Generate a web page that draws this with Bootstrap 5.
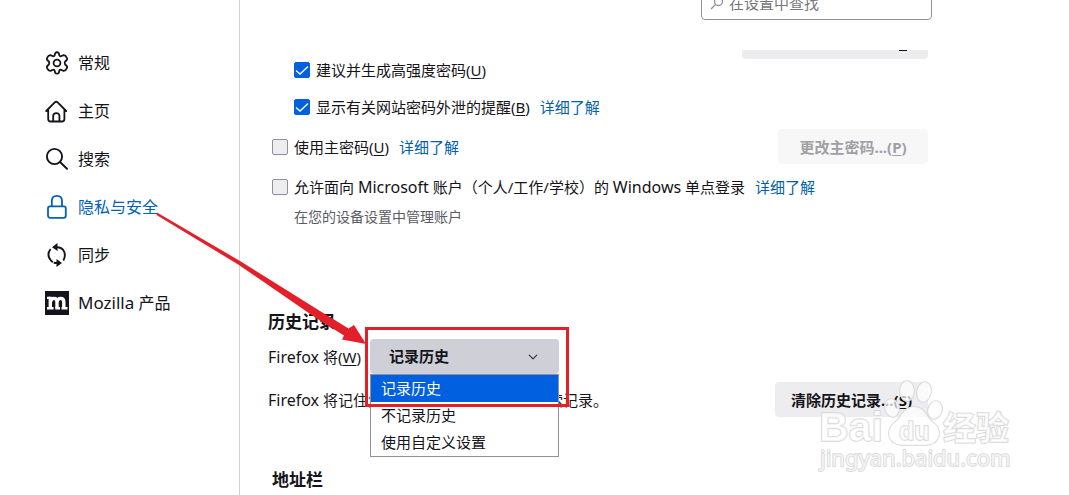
<!DOCTYPE html>
<html lang="zh-CN">
<head>
<meta charset="utf-8">
<meta name="viewport" content="width=device-width, initial-scale=1">
<title>设置</title>
<link rel="stylesheet" href="https://cdn.jsdelivr.net/npm/bootstrap@5.3.0/dist/css/bootstrap.min.css">
<style>
  body { font: 15px/22px "Noto Sans", "Noto Sans CJK SC", sans-serif; color: #15141a; background: #fff; }
  a { color: #0061a8; text-decoration: none; }
  u { text-underline-offset: 2px; }
  .latin { font-size: 16px; line-height: 1; }
  .side-nav { flex: 0 0 240px; padding: 39px 0 0 45px; border-right: 1px solid #cfcfd4; }
  .side-nav .nav-link { height: 48px; padding: 0; gap: 9px; font-size: 16px; color: #15141a; }
  .side-nav .nav-link.active { color: #0061b8; }
  .side-nav .latin { font-size: 17px; }
  .side-nav svg { width: 24px; height: 24px; flex: none; }
  .pane { padding: 0 16px 0 28px; }
  .search-bar { height: 20px; max-width: 664px; }
  .search-box { width: 231px; height: 34px; padding: 0 8px; border: 1px solid #8f8f9d; border-radius: 4px; color: #76767c; }
  .search-box input { border: 0; outline: 0; padding: 0; background: none; min-width: 0; color: inherit; }
  .search-box input::placeholder { color: #76767c; opacity: 1; }
  .prefs { max-width: 660px; }
  .scroll-edge { height: 9px; margin-top: 30px; }
  .pref-btn { height: 35px; padding: 0 16px; border: 0; border-radius: 4px; background: #ededf0; color: #15141a; font-size: 15px; font-weight: 700; white-space: nowrap; }
  .pref-btn:disabled { background: #f7f7f8; color: #a0a0a4; opacity: 1; min-width: 150px; }
  .edge-btn { width: 186px; }
  .pref-check { gap: 6px; padding-left: 4px; height: 22px; white-space: nowrap; }
  .pref-check.nested { padding-left: 26px; }
  .pref-check .form-check-input { width: 16px; height: 16px; margin: 0; border: 1px solid #8f8f9d; border-radius: 2px; background-color: #ededf0; flex: none; }
  .pref-check .form-check-input:checked { background-color: #0060df; border-color: #0060df; background-image: url("data:image/svg+xml,%3csvg xmlns='http://www.w3.org/2000/svg' viewBox='0 0 14 14'%3e%3cpath fill='none' stroke='%23fff' stroke-width='1.3' d='M1 7.500L5 11L13 3.500'/%3e%3c/svg%3e"); }
  .pref-check a { margin-left: 4px; }
  .hint { padding-left: 26px; font-size: 14px; color: #5b5b66; }
  .group-title { font-size: 17px; line-height: 24px; font-weight: 700; margin: 0; }
  .choice { width: 189px; }
  .choice .form-select { height: 35px; padding: 0 32px 0 19px; border: 0; border-radius: 4px; background-color: #cfcfd8; background-size: 10px 10px; background-position: right 21px center; font-size: 15px; font-weight: 700; color: #15141a; }
  .choice .dropdown-menu { top: 35px; left: 0; width: 100%; min-width: 0; padding: 0; border: 1px solid #8f8f9d; border-radius: 0; font-size: 15px; color: #15141a; z-index: 5; }
  .choice .dropdown-item { height: 27px; padding: 0 10px; line-height: 27px; color: #15141a; }
  .choice .dropdown-item.active { background: #0060df; color: #fff; }
  .annotation { left: 0; top: 0; z-index: 10; pointer-events: none; }
  .watermark { left: 812px; top: 374px; z-index: 11; pointer-events: none; }
</style>
</head>
<body>
<div class="d-flex min-vh-100 position-relative overflow-hidden">
  <nav class="side-nav nav flex-column" aria-label="设置类别">
    <a class="nav-link d-flex align-items-center" href="#general">
      <svg viewBox="0 0 24 24" fill="none" stroke="currentColor" stroke-width="1.8" stroke-linejoin="round"><path d="M10.2 2.2Q12 .4 13.8 2.2L14.4 4.5Q14.8 5.5 16 5.2L18.5 4.1Q20.5 3.9 21.6 6.4Q22.600 8.200 21.700 9L20.200 10.500Q19.300 12 20.200 13.500L21.700 15Q22.600 15.800 21.600 17.600Q20.500 20.100 18.500 19.900L16 18.800Q14.800 18.500 14.400 19.500L13.800 21.800Q12 23.600 10.200 21.800L9.600 19.500Q9.200 18.500 8 18.800L5.500 19.900Q3.500 20.100 2.400 17.600Q1.400 15.800 2.300 15L3.800 13.500Q4.700 12 3.800 10.500L2.300 9Q1.400 8.200 2.400 6.400Q3.500 3.900 5.500 4.100L8 5.200Q9.200 5.500 9.600 4.500Z"/><circle cx="12" cy="12" r="3.400"/></svg>
      <span>常规</span></a>
    <a class="nav-link d-flex align-items-center" href="#home">
      <svg viewBox="0 0 24 24" fill="none" stroke="currentColor" stroke-width="1.800" stroke-linecap="round" stroke-linejoin="round"><path d="M1.200 12L10 3.200Q11.200 2.200 12.400 3.200L21.200 12M3.200 10.500V20Q3.200 22.500 5.700 22.500H17Q19.400 22.500 19.400 20V10.500M8.200 22.500V17Q8.200 14.200 11.300 14.200T14.400 17V22.500"/></svg>
      <span>主页</span></a>
    <a class="nav-link d-flex align-items-center" href="#search">
      <svg viewBox="0 0 24 24" fill="none" stroke="currentColor" stroke-width="1.900" stroke-linecap="round"><circle cx="9.500" cy="9.500" r="7.600"/><path d="M15 15L22 21.800"/></svg>
      <span>搜索</span></a>
    <a class="nav-link active d-flex align-items-center" href="#privacy" aria-current="page">
      <svg viewBox="0 0 24 24" fill="none" stroke="currentColor" stroke-width="1.800"><rect x="3" y="11.300" width="17.800" height="11.500" rx="2"/><path d="M6.800 11.300V6Q6.800.900 11.900.900T17 6V11.300"/></svg>
      <span>隐私与安全</span></a>
    <a class="nav-link d-flex align-items-center" href="#sync">
      <svg viewBox="0 0 24 24" fill="none" stroke="currentColor" stroke-width="1.900"><path d="M7.800 19.300Q.400 12.500 5.600 6M11.500 4.200Q17.500 4.200 19.300 9Q20.800 13.500 18.300 17.600M12.500 20Q10.500 20.200 8.700 19.600"/><path d="M12.500 0V8L7 4.200ZM11.500 16V24L17 20Z" fill="currentColor" stroke="none"/></svg>
      <span>同步</span></a>
    <a class="nav-link d-flex align-items-center" href="#more">
      <svg viewBox="0 0 24 24"><path fill="#15141a" d="M0 0H24V24H0Z"/><path fill="none" stroke="#fff" stroke-width="2.400" d="M2 6.900H5.300M2 17.300H8.600M10.300 17.300H15M16.500 17.300H22.500"/><path fill="none" stroke="#fff" stroke-width="3.400" d="M5.300 5.700V17M5.600 10.500Q6.400 7.400 9 7.400Q12 7.400 12 11V17M12 11Q12.800 7.400 15.600 7.400Q18.800 7.400 18.800 11V17"/></svg>
      <span><span class="latin">Mozilla</span> 产品</span></a>
  </nav>

  <main class="pane flex-fill">
    <div class="search-bar d-flex justify-content-end align-items-end overflow-hidden">
      <label class="search-box d-flex align-items-center flex-shrink-0">
        <svg class="me-1 flex-shrink-0" width="15" height="15" viewBox="0 0 15 15" fill="none" stroke="#8f8f9d" stroke-width="1.300"><circle cx="8.500" cy="5.500" r="4"/><path d="M5.500 8.500L1 13"/></svg>
        <input class="flex-fill" type="text" placeholder="在设置中查找" aria-label="在设置中查找">
      </label>
    </div>

    <div class="prefs">
      <div class="scroll-edge d-flex justify-content-end align-items-end overflow-hidden">
        <button class="pref-btn edge-btn flex-shrink-0" type="button" aria-label="已保存的登录信息"><svg class="d-block ms-auto me-1" width="9" height="35" aria-hidden="true"><path d="M0 26.500H8" stroke="#15141a"/></svg></button>
      </div>
      <div class="pref-check nested d-flex align-items-center">
        <input class="form-check-input" type="checkbox" id="suggest" checked>
        <label for="suggest">建议并生成高强度密码(<u>U</u>)</label>
      </div>
      <div class="pref-check nested d-flex align-items-center" style="margin-top:15px">
        <input class="form-check-input" type="checkbox" id="breach" checked>
        <label for="breach">显示有关网站密码外泄的提醒(<u>B</u>)</label>
        <a href="#breach-info">详细了解</a>
      </div>
      <div class="d-flex align-items-center justify-content-between" style="margin-top:11px">
        <div class="pref-check d-flex align-items-center">
          <input class="form-check-input" type="checkbox" id="primary">
          <label for="primary">使用主密码(<u>U</u>)</label>
          <a href="#primary-info">详细了解</a>
        </div>
        <button class="pref-btn" type="button" disabled>更改主密码...(<u>P</u>)</button>
      </div>
      <div class="pref-check d-flex align-items-center" style="margin-top:12px">
        <input class="form-check-input" type="checkbox" id="sso">
        <label for="sso">允许面向 <span class="latin">Microsoft</span> 账户（个人/工作/学校）的 <span class="latin">Windows</span> 单点登录</label>
        <a href="#sso-info">详细了解</a>
      </div>
      <div class="hint mt-2">在您的设备设置中管理账户</div>

      <h2 class="group-title" style="margin-top:82px">历史记录</h2>
      <div class="d-flex align-items-center" style="margin-top:5px;gap:9px">
        <label for="history" class="text-nowrap"><span class="latin">Firefox</span> 将(<u>W</u>)</label>
        <div class="choice position-relative">
          <select class="form-select" id="history">
            <option selected>记录历史</option>
            <option>不记录历史</option>
            <option>使用自定义设置</option>
          </select>
          <ul class="dropdown-menu show">
            <li><a class="dropdown-item active" href="#remember">记录历史</a></li>
            <li><a class="dropdown-item" href="#never">不记录历史</a></li>
            <li><a class="dropdown-item" href="#custom">使用自定义设置</a></li>
          </ul>
        </div>
      </div>
      <div class="d-flex align-items-center justify-content-between mt-2">
        <span><span class="latin">Firefox</span> 将记住您的浏览、下载、表单和搜索记录。</span>
        <button class="pref-btn" type="button">清除历史记录...(<u>S</u>)</button>
      </div>
      <h2 class="group-title ps-1" style="margin-top:51px">地址栏</h2>
    </div>
  </main>

  <svg class="annotation position-absolute" width="580" height="420" viewBox="0 0 580 420" aria-hidden="true">
    <path fill="#e3202a" d="M157 212.500L240 261L320 311L348.500 328.500L354 325L366 344L342 339.500L344 335.500L316 318L239 265L156.500 215Z"/>
    <path fill="none" stroke="#e3202a" stroke-width="3" d="M366.500 328.500H567.500V405.500H366.500Z"/>
  </svg>
  <svg class="watermark position-absolute" width="206" height="102" viewBox="0 0 206 102" aria-hidden="true">
    <g fill="#fff" fill-opacity=".7" stroke="#d6d6d6" stroke-width="1.500" paint-order="stroke">
      <g font-family="Liberation Sans, sans-serif" font-weight="700">
        <text x="7" y="67" font-size="41">Bai</text>
        <text x="131" y="66" font-size="33" font-family="Noto Sans CJK SC, sans-serif">经验</text>
      </g>
      <path d="M102 33C90 33 91 43 82 49C73 56 76 71 90 71H114C128 71 131 56 122 49C113 43 114 33 102 33Z"/>
      <ellipse cx="80" cy="34" rx="7" ry="9" transform="rotate(-15 80 34)"/>
      <ellipse cx="95" cy="17" rx="7" ry="10"/>
      <ellipse cx="112" cy="18" rx="7" ry="10" transform="rotate(12 112 18)"/>
      <ellipse cx="123" cy="36" rx="7" ry="9" transform="rotate(15 123 36)"/>
      <text x="87" y="66" font-size="25" font-family="Liberation Sans, sans-serif" font-weight="700">du</text>
      <text x="8" y="92" font-size="22" font-family="Noto Sans, sans-serif">jingyan.baidu.com</text>
    </g>
  </svg>
</div>
<script src="https://cdn.jsdelivr.net/npm/bootstrap@5.3.0/dist/js/bootstrap.bundle.min.js"></script>
</body>
</html>
